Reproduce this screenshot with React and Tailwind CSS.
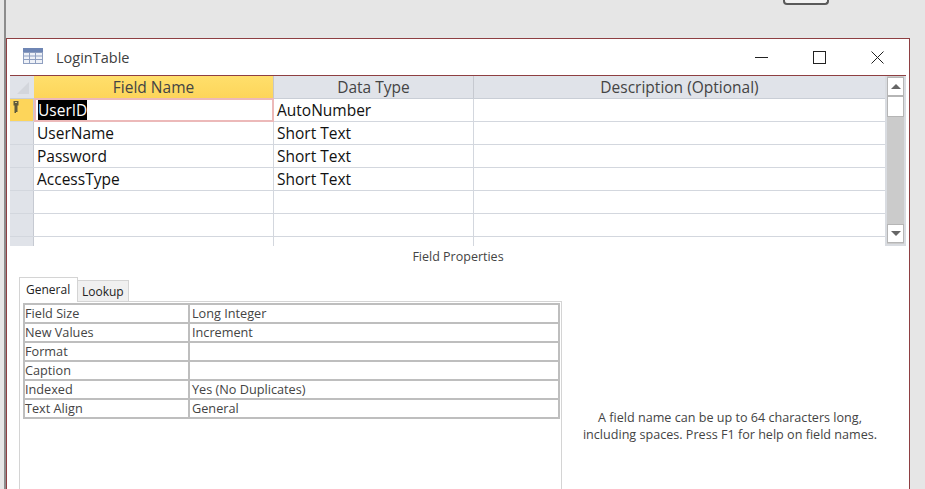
import React from "react";

const font = { fontFamily: '"Open Sans", "Noto Sans", sans-serif' };

const fields = [
  { name: "UserID", type: "AutoNumber" },
  { name: "UserName", type: "Short Text" },
  { name: "Password", type: "Short Text" },
  { name: "AccessType", type: "Short Text" },
  { name: "", type: "" },
  { name: "", type: "" },
  { name: "", type: "" },
];

const props = [
  ["Field Size", "Long Integer"],
  ["New Values", "Increment"],
  ["Format", ""],
  ["Caption", ""],
  ["Indexed", "Yes (No Duplicates)"],
  ["Text Align", "General"],
];

function TableIcon() {
  return (
    <svg width="20" height="16" viewBox="0 0 20 16" className="block mb-[2px]">
      <rect x="0" y="0" width="20" height="16" fill="#8f9fc0" />
      <rect x="0" y="0" width="20" height="4" fill="#6f86b4" />
      <path d="M1 5h5v2.500H1zM7 5h5v2.500H7zM13 5h6v2.500h-6zM1 8.500h5V11H1zM7 8.500h5V11H7zM13 8.500h6V11h-6zM1 12h5v3H1zM7 12h5v3H7zM13 12h6v3h-6z" fill="#eef1f7" />
    </svg>
  );
}

function KeyIcon() {
  return (
    <svg width="6" height="12" viewBox="0 0 6 12" className="block">
      <path d="M0.500 0h5v4.500H4.500V11H3v1H1.500V4.500h-1z" fill="#5f5a3c" />
      <path d="M2 1h2v1H2z" fill="#d9c77a" />
    </svg>
  );
}

export default function App() {
  return (
    <div className="w-[925px] h-[489px] overflow-hidden bg-[#e6e6e6] flex flex-col pl-[4px]" style={font}>
      <div className="h-[38px] shrink-0 border-l-2 border-[#8c8c8c] flex justify-end pr-[96px]">
        <div className="w-[46px] h-[5px] bg-[#f2f2f2] border-2 border-t-0 border-[#5a5a5a] rounded-b-[4px]" />
      </div>
      <div className="flex-1 min-h-0 flex border-l-2 border-[#8c8c8c]">
        <div className="w-[904px] h-[451px] shrink-0 bg-white border border-b-0 border-[#8e3f42] flex flex-col">
          <div className="h-[36px] shrink-0 flex items-center pl-[16px] pr-[25px]">
            <TableIcon />
            <span className="ml-[13px] mt-px text-[14.500px] text-[#404040]">LoginTable</span>
            <div className="ml-auto flex items-center gap-[45px]">
              <svg width="13" height="13" viewBox="0 0 13 13" className="block">
                <path d="M0 6.500h13" stroke="#222" strokeWidth="1" />
              </svg>
              <svg width="13" height="13" viewBox="0 0 13 13" className="block">
                <rect x="0.500" y="0.500" width="12" height="12" fill="none" stroke="#222" strokeWidth="1" />
              </svg>
              <svg width="13" height="13" viewBox="0 0 13 13" className="block">
                <path d="M0.500 0.500l12 12M12.500 0.500l-12 12" stroke="#222" strokeWidth="1" />
              </svg>
            </div>
          </div>

          <div className="ml-[3px] w-[896px] h-[171px] shrink-0 border-t border-[#8e3f42] flex overflow-hidden">
            <div className="w-[875px] shrink-0">
              <div className="h-[23px] flex text-[15.500px] text-[#444] border-b border-[#c9ced6]">
                <div className="w-[24px] bg-[#e0e3e9] flex items-center justify-center">
                  <svg width="18" height="18" viewBox="0 0 18 18" className="block">
                    <path d="M16 4v12H4z" fill="#d3d6dc" />
                  </svg>
                </div>
                <div className="w-[240px] border-r border-[#c6c6c6] bg-gradient-to-b from-[#ffdf6b] to-[#fdd55a] text-center leading-[22px]">
                  Field Name
                </div>
                <div className="w-[200px] border-r border-[#c6c9d0] bg-[#e0e3e9] text-center leading-[22px]">
                  Data Type
                </div>
                <div className="flex-1 bg-[#e0e3e9] text-center leading-[22px]">
                  Description (Optional)
                </div>
              </div>
              {fields.map((f, i) => (
                <div key={i} className="h-[23px] flex text-[15.500px] text-[#111] border-b border-[#d3d7de]">
                  <div className={`w-[24px] shrink-0 border-r border-[#c6cad2] pt-[2px] pl-[3px] ${i === 0 ? "bg-[#fdd55a]" : "bg-[#e0e3e9]"}`}>
                    {i === 0 && <KeyIcon />}
                  </div>
                  {i === 0 ? (
                    <div className="w-[240px] shrink-0 pl-[3px] -mt-px h-[24px] border-2 border-[#ecb9b9] leading-[20px]">
                      <span className="bg-black text-white inline-block leading-[20px] -ml-[1px]">{f.name}</span>
                    </div>
                  ) : (
                    <div className="w-[240px] shrink-0 pl-[3px] leading-[22px] border-r border-[#d3d7de]">{f.name}</div>
                  )}
                  <div className="w-[200px] shrink-0 pl-[3px] leading-[22px] border-r border-[#d3d7de]">{f.type}</div>
                  <div className="flex-1" />
                </div>
              ))}
            </div>
            <div className="w-[21px] shrink-0 bg-[#cbcbcb] border-x-2 border-b-2 border-[#d9dce1] flex flex-col">
              <div className="h-[19px] mt-[1px] bg-white border border-[#b5b5b5] flex items-center justify-center">
                <div className="w-0 h-0 border-x-[5px] border-x-transparent border-b-[5px] border-b-[#666]" />
              </div>
              <div className="h-[21px] bg-white border border-[#b5b5b5]" />
              <div className="mt-auto h-[19px] mb-[1px] bg-white border border-[#b5b5b5] flex items-center justify-center">
                <div className="w-0 h-0 border-x-[5px] border-x-transparent border-t-[5px] border-t-[#666]" />
              </div>
            </div>
          </div>

          <div className="h-[20px] mt-[1px] text-center text-[12.500px] leading-[20px] text-[#444] shrink-0">Field Properties</div>

          <div className="flex flex-1 min-h-0 pl-[12px] pt-[10px]">
            <div className="w-[543px] shrink-0 flex flex-col">
              <div className="flex items-end h-[25px] shrink-0 relative z-10 -mb-px">
                <div className="w-[59px] h-[25px] bg-white border border-b-0 border-[#d4d4d4] pl-[6px] text-[12px] leading-[23px] text-[#222]">General</div>
                <div className="w-[51px] h-[22px] bg-[#f0f0f0] border border-l-0 border-[#d4d4d4] pl-[4px] text-[12px] leading-[21px] text-[#222]">Lookup</div>
              </div>
              <div className="flex-1 border border-b-0 border-[#d4d4d4] pl-[3px] pr-[1px] pt-[1px]">
                <div className="border-t-2 border-l-2 border-[#bebebe] w-[537px]">
                  {props.map(([label, value]) => (
                    <div key={label} className="h-[19px] flex text-[12.700px] leading-[17px] text-[#444] border-b-2 border-r-2 border-[#bebebe]">
                      <div className="w-[165px] border-r-2 border-[#bebebe]">{label}</div>
                      <div className="flex-1 pl-[2px]">{value}</div>
                    </div>
                  ))}
                </div>
              </div>
            </div>
            <div className="flex-1 flex flex-col items-center pt-[132px] pr-[11px] text-[12.600px] leading-[17px] text-[#444]">
              <div>A field name can be up to 64 characters long,</div>
              <div>including spaces. Press F1 for help on field names.</div>
            </div>
          </div>
        </div>
      </div>
    </div>
  );
}
